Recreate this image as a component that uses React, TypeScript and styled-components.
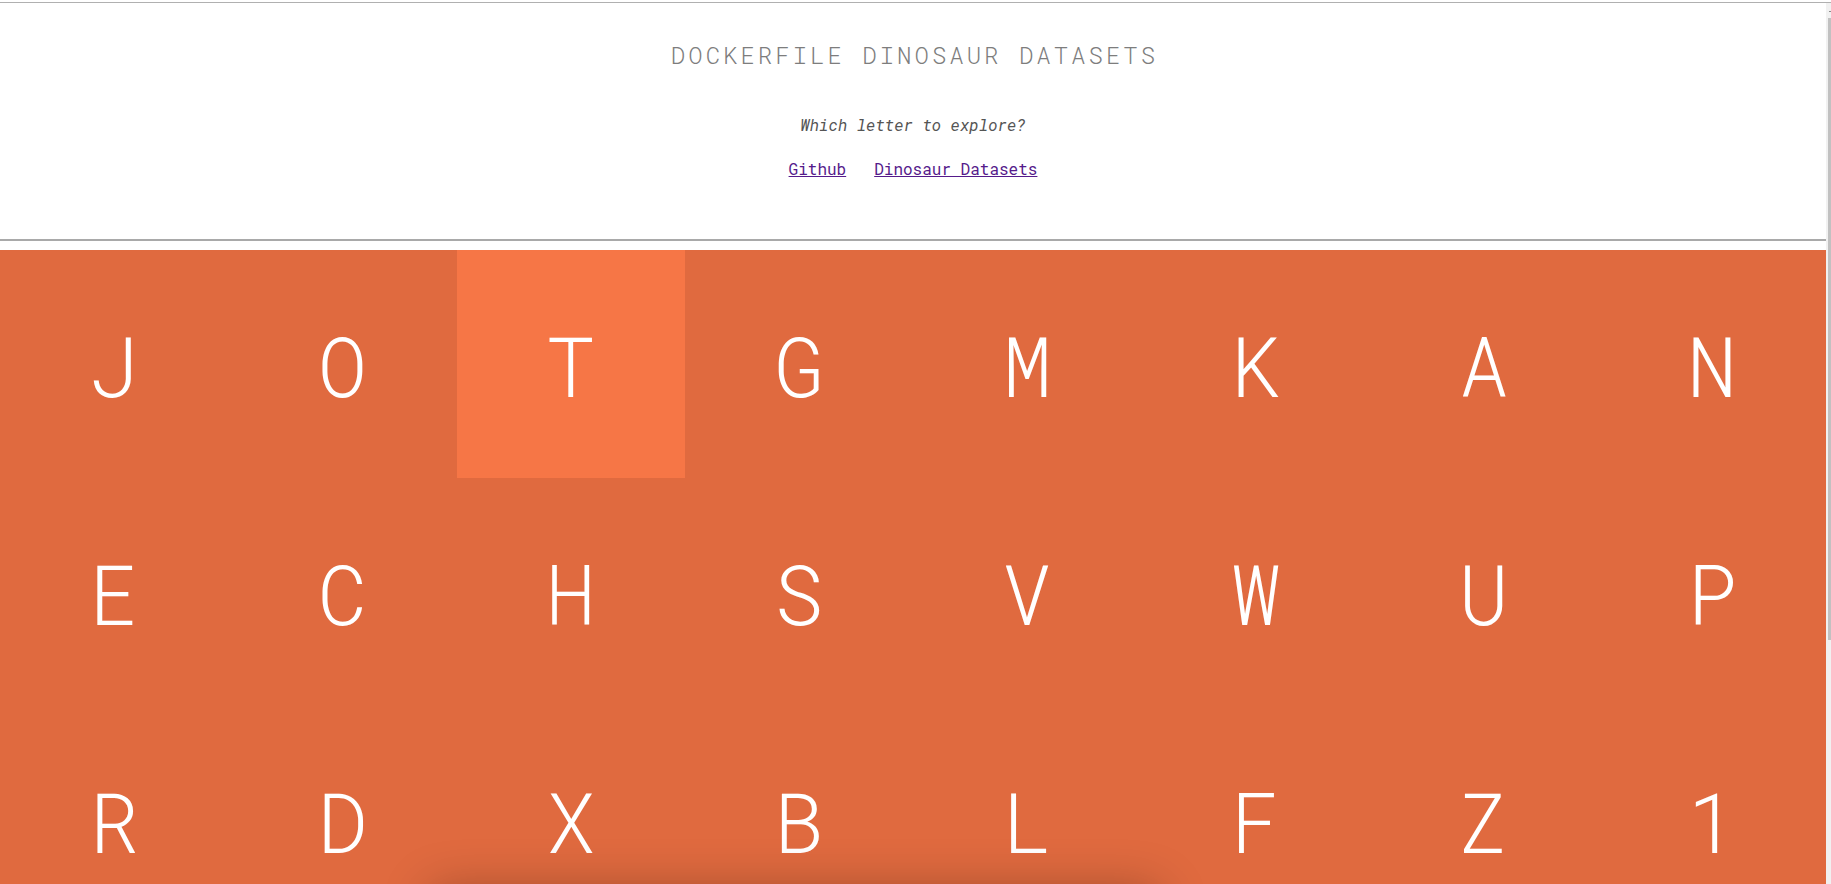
import React from "react";
import styled, { createGlobalStyle } from "styled-components";

const GlobalStyle = createGlobalStyle`
  html, body {
    margin: 0;
    padding: 0;
    background: #ffffff;
    overflow: hidden;
  }
  body {
    font-family: "Roboto Mono", "Liberation Mono", "DejaVu Sans Mono", monospace;
  }
`;

const Frame = styled.div`
  margin-top: 2px;
  border-top: 1px solid #b0b0b0;
  display: flex;
  height: 881px;
  overflow: hidden;
`;

const Main = styled.main`
  flex: 1;
  min-width: 0;
  display: flex;
  flex-direction: column;
`;

const Header = styled.header`
  flex: none;
  display: flex;
  flex-direction: column;
  align-items: center;
  padding-top: 38px;
  height: 238px;
  box-sizing: border-box;
  border-bottom: 2px solid #a9a9a9;
  margin-bottom: 9px;
`;

const Title = styled.h1`
  margin: 0;
  font-family: "Roboto Mono", "Liberation Mono", "DejaVu Sans Mono", monospace;
  font-weight: 300;
  font-size: 24px;
  line-height: 28px;
  letter-spacing: 3px;
  color: #7d7d7d;
  padding-left: 3px;
`;

const Prompt = styled.p`
  margin: 46px 0 0;
  font-family: "Roboto Mono", "Liberation Mono", "DejaVu Sans Mono", monospace;
  font-style: italic;
  font-size: 16px;
  line-height: 20px;
  color: #555555;
`;

const Links = styled.nav`
  margin-top: 24px;
  display: flex;
  gap: 28px;
`;

const Link = styled.a`
  font-family: "Roboto Mono", "Liberation Mono", "DejaVu Sans Mono", monospace;
  font-size: 16px;
  line-height: 20px;
  color: #551a8b;
  text-decoration: underline;
`;

const Grid = styled.section`
  flex: none;
  display: grid;
  grid-template-columns: repeat(8, 1fr);
  background: #e06a3f;
`;

const Cell = styled.div<{ $active?: boolean }>`
  aspect-ratio: 1 / 1;
  display: flex;
  align-items: center;
  justify-content: center;
  background: ${(p) => (p.$active ? "#f67646" : "#e06a3f")};
  color: #ffffff;
  font-family: "Roboto Mono", "Liberation Mono", "DejaVu Sans Mono", monospace;
  font-weight: 300;
  font-size: 83px;
  line-height: 1;
  padding-top: 0;
  box-sizing: border-box;
`;

const Scrollbar = styled.div`
  width: 5px;
  flex: none;
  background: #f1f1f1;
  display: flex;
  flex-direction: column;
  align-items: flex-end;
`;

const ScrollArrow = styled.div`
  margin-top: 8px;
  width: 2px;
  height: 1px;
  background: #8a8a8a;
`;

const ScrollThumb = styled.div`
  margin-top: 6px;
  width: 3px;
  height: 622px;
  background: #c1c1c1;
`;

const Sheet = styled.div`
  position: fixed;
  left: 440px;
  top: 905px;
  width: 710px;
  height: 80px;
  background: #ffffff;
  box-shadow: 0 -6px 50px 8px rgba(0, 0, 0, 0.3);
`;

const letters = [
  "J", "O", "T", "G", "M", "K", "A", "N",
  "E", "C", "H", "S", "V", "W", "U", "P",
  "R", "D", "X", "B", "L", "F", "Z", "1",
];

export default function App() {
  return (
    <>
      <GlobalStyle />
      <Frame>
        <Main>
          <Header>
            <Title>DOCKERFILE DINOSAUR DATASETS</Title>
            <Prompt>Which letter to explore?</Prompt>
            <Links>
              <Link href="#github">Github</Link>
              <Link href="#datasets">Dinosaur Datasets</Link>
            </Links>
          </Header>
          <Grid>
            {letters.map((l) => (
              <Cell key={l} $active={l === "T"}>
                {l}
              </Cell>
            ))}
          </Grid>
        </Main>
        <Scrollbar>
          <ScrollArrow />
          <ScrollThumb />
        </Scrollbar>
      </Frame>
      <Sheet />
    </>
  );
}
